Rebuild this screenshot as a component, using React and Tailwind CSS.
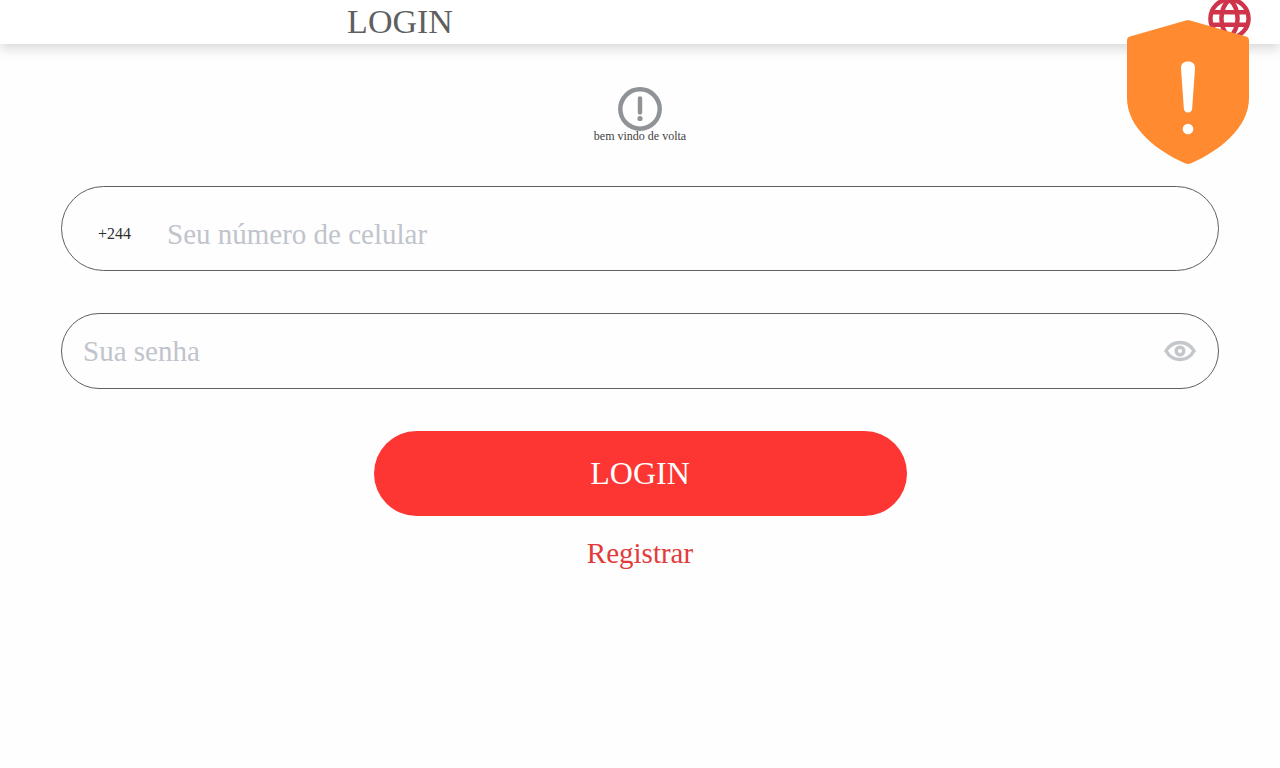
export default function App() {
  const serif = "font-['Liberation_Serif',serif]";
  return (
    <div className={`relative min-h-[768px] overflow-hidden bg-[#fefefe] ${serif}`}>
      <header className="relative flex h-[44px] items-center overflow-hidden bg-white shadow-[0_4px_12px_rgba(0,0,0,0.16)]">
        <div className="w-[800px] text-center text-[34px] leading-[44px] text-[#5f5f5f]">LOGIN</div>
        <svg className="ml-auto mr-[29px] mt-[-8px] h-[43px] w-[43px]" viewBox="0 0 44 44" fill="none" stroke="#d0344a" strokeWidth="4.600">
          <circle cx="22" cy="22" r="19.500" />
          <path d="M22 2.500C11 12 11 32 22 41.500C33 32 33 12 22 2.500Z" strokeLinejoin="round" />
          <path d="M4 15.500h36M4 28.500h36" />
        </svg>
      </header>
      <main className="flex flex-col items-center">
        <svg className="mt-[43px] h-[44px] w-[44px]" viewBox="0 0 44 44" fill="none">
          <circle cx="22" cy="22" r="19.700" stroke="#8f9296" strokeWidth="4.400" />
          <path d="M22 11.500v14" stroke="#8f9296" strokeWidth="4.400" strokeLinecap="round" />
          <circle cx="22" cy="31.500" r="2.600" fill="#8f9296" />
        </svg>
        <div className="mt-[-2px] text-[12px] leading-[14px] text-[#3f3f3f]">bem vindo de volta</div>
        <div className="mt-[43px] flex h-[85px] w-[1158px] items-center rounded-[42.5px] border border-[#5f6063] pl-[36px]">
          <span className="mt-[10px] w-[69px] text-[16px] leading-[18px] text-[#2f2f2f]">+244</span>
          <span className="mt-[10px] text-[29px] leading-[34px] text-[#c0c4cc]">Seu número de celular</span>
        </div>
        <div className="mt-[42px] flex h-[76px] w-[1158px] items-center justify-between rounded-[38px] border border-[#5f6063] pl-[21px] pr-[22px]">
          <span className="text-[29px] leading-[34px] text-[#c0c4cc]">Sua senha</span>
          <svg className="h-[32px] w-[32px]" viewBox="0 0 32 32" fill="none" stroke="#c3c6ca" strokeWidth="3.400">
            <path d="M2 16C5.500 10 10 7.500 16 7.500S26.500 10 30 16C26.500 22 22 24.500 16 24.500S5.500 22 2 16Z" />
            <circle cx="16" cy="16" r="3.800" />
          </svg>
        </div>
        <div className="mt-[42px] flex h-[85px] w-[533px] items-center justify-center rounded-[42.5px] bg-[#fd3633] pb-[2px] text-[32px] leading-[36px] text-white">LOGIN</div>
        <div className="mt-[20px] text-[29px] leading-[34px] text-[#e33b39]">Registrar</div>
      </main>
      <svg className="absolute left-[1127px] top-[20px] h-[144px] w-[122px]" viewBox="0 0 122 144">
        <path d="M58 .7 3 16.400C1 17 0 18.300 0 20.500V78c0 30 30 53 58 65.300 2.200 .9 4 .9 6 0C92 131 122 108 122 78V20.500c0-2.200-1-3.500-3-4.100L64 .7c-2-.6-4-.6-6 0Z" fill="#ff8a30" />
        <path d="M54 48.500C53.700 44 56.500 41.500 61 41.500S68.300 44 68 48.500L65.200 88C65 91 63.500 92.500 61 92.500S57 91 56.800 88Z" fill="#fff" />
        <circle cx="61" cy="109" r="5.300" fill="#fff" />
      </svg>
    </div>
  );
}
